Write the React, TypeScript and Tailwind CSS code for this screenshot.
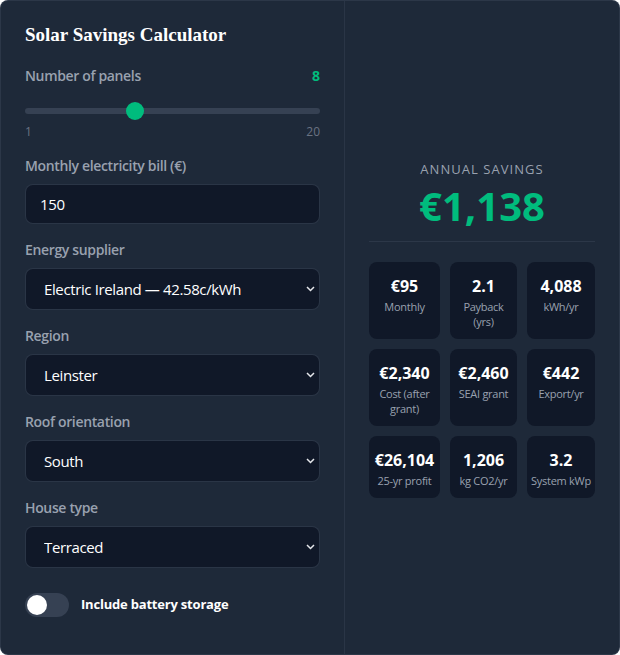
import React from "react";

const font = { fontFamily: '"Open Sans", "Noto Sans", sans-serif' };

const Chevron = () => (
  <svg
    className="pointer-events-none absolute right-[5px] top-1/2 -translate-y-1/2"
    width="9"
    height="6"
    viewBox="0 0 9 6"
    fill="none"
  >
    <path d="M1 1l3.5 3.5L8 1" stroke="#e5e7eb" strokeWidth="1.5" />
  </svg>
);

const SelectField = ({ label, value }: { label: string; value: string }) => (
  <div className="flex flex-col mt-4">
    <label className="text-[14px] leading-5 font-semibold tracking-tight text-gray-400 mb-2">
      {label}
    </label>
    <div className="relative">
      <select
        defaultValue={value}
        className="w-full h-[42px] appearance-none rounded-lg bg-gray-900 border border-gray-700/70 pl-[18px] text-[15px] tracking-tight text-white outline-none"
        style={font}
      >
        <option>{value}</option>
      </select>
      <Chevron />
    </div>
  </div>
);

const stats = [
  { value: "€95", label: "Monthly" },
  { value: "2.1", label: "Payback (yrs)" },
  { value: "4,088", label: "kWh/yr" },
  { value: "€2,340", label: "Cost (after grant)" },
  { value: "€2,460", label: "SEAI grant" },
  { value: "€442", label: "Export/yr" },
  { value: "€26,104", label: "25-yr profit" },
  { value: "1,206", label: "kg CO2/yr" },
  { value: "3.2", label: "System kWp" },
];

const App = () => {
  return (
    <div className="w-[620px] h-[655px] bg-white" style={font}>
      <div className="w-full h-full flex rounded-lg border border-gray-700/60 bg-gray-800 overflow-hidden">
        {/* inputs */}
        <div className="w-[344px] shrink-0 flex flex-col px-[24px] pt-[20px] border-r border-gray-700/50">
          <h1
            className="text-[19px] leading-7 font-bold text-white"
            style={{ fontFamily: '"Liberation Serif", serif' }}
          >
            Solar Savings Calculator
          </h1>
          <div className="flex items-center justify-between mt-[17px]">
            <span className="text-[14px] leading-5 font-semibold tracking-tight text-gray-400">
              Number of panels
            </span>
            <span className="text-[14px] leading-5 font-bold text-emerald-500">8</span>
          </div>
          <div className="relative h-[18px] mt-4 flex items-center">
            <div className="w-full h-[6px] rounded-full bg-gray-700" />
            <div className="absolute left-[101px] w-[18px] h-[18px] rounded-full bg-emerald-500" />
          </div>
          <div className="flex justify-between text-[12px] leading-4 text-gray-500 mt-[4px]">
            <span>1</span>
            <span>20</span>
          </div>
          <div className="flex flex-col mt-4">
            <label className="text-[14px] leading-5 font-semibold tracking-tight text-gray-400 mb-2">
              Monthly electricity bill (€)
            </label>
            <input
              defaultValue="150"
              className="w-full h-10 rounded-lg bg-gray-900 border border-gray-700/70 pl-[14px] text-[15px] tracking-tight text-white outline-none"
              style={font}
            />
          </div>
          <SelectField label="Energy supplier" value="Electric Ireland — 42.58c/kWh" />
          <SelectField label="Region" value="Leinster" />
          <SelectField label="Roof orientation" value="South" />
          <SelectField label="House type" value="Terraced" />
          <div className="flex items-center gap-3 mt-[25px]">
            <div className="w-11 h-6 rounded-full bg-gray-700 flex items-center px-[2px]">
              <div className="w-5 h-5 rounded-full bg-white" />
            </div>
            <span className="text-[13px] font-bold tracking-[-0.2px] text-white">
              Include battery storage
            </span>
          </div>
        </div>
        {/* results */}
        <div className="flex-1 flex flex-col justify-center px-6 pt-[3px]">
          <div className="text-center text-[13px] tracking-[0.08em] text-gray-400 uppercase">
            Annual savings
          </div>
          <div className="text-center text-[40px] leading-[48px] font-bold text-emerald-500 mt-[2px]">
            €1,138
          </div>
          <div className="border-t border-gray-700/60 mt-[11px] mb-5" />
          <div className="grid grid-cols-[71px_67px_68px] gap-[10px]">
            {stats.map((s) => (
              <div
                key={s.label}
                className="rounded-lg bg-gray-900 flex flex-col items-center text-center px-[3px] pt-3 pb-[10px]"
              >
                <div className="text-[16px] leading-6 font-bold text-white">{s.value}</div>
                <div className="text-[11px] leading-[15px] tracking-tight text-gray-400 mt-[1px]">
                  {s.label}
                </div>
              </div>
            ))}
          </div>
        </div>
      </div>
    </div>
  );
};

export default App;
